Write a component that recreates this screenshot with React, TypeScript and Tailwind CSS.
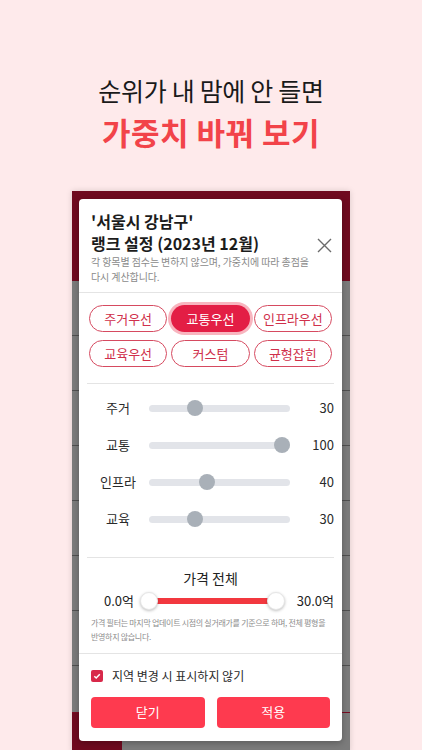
import React from 'react'

const presets = ['주거우선', '교통우선', '인프라우선', '교육우선', '커스텀', '균형잡힌']

const weights = [
  { label: '주거', value: 30 },
  { label: '교통', value: 100 },
  { label: '인프라', value: 40 },
  { label: '교육', value: 30 },
]

function Slider({ value }: { value: number }) {
  // thumb centre moves over the track, 8px inset on each side
  return (
    <div className="relative h-[16px] flex-1 flex items-center">
      <div className="h-[7px] w-full rounded-full bg-[#e2e4e9]" />
      <div
        className="absolute top-0 h-[16px] w-[16px] rounded-full bg-[#a9b0b8]"
        style={{ left: `calc(${value}% - ${(value / 100) * 16}px)` }}
      />
    </div>
  )
}

export default function App() {
  return (
    <div
      className="w-[422px] h-[750px] overflow-hidden bg-[#feeaeb] flex flex-col items-center"
      style={{ fontFamily: '"Noto Sans CJK KR", "Noto Sans", sans-serif' }}
    >
      <div className="pt-[73px] flex flex-col items-center">
        <h1 className="text-[25px] leading-[34px] font-normal text-[#1a1a1a] tracking-[-0.3px]">순위가 내 맘에 안 들면</h1>
        <h2 className="mt-[5px] text-[31px] leading-[40px] font-bold text-[#f24349] tracking-[0.5px]">가중치 바꿔 보기</h2>
      </div>

      <div className="relative mt-[39px] w-[278px] flex-1 shadow-[0_0_6px_rgba(0,0,0,0.15)]">
        {/* screenshot behind the dialog */}
        <div className="h-[90px] bg-[#6f0a1f]" />
        <div className="bg-[#7b7b7b]">
          {[0, 1, 2, 3, 4, 5, 6].map((i) => (
            <div key={i} className="h-[55px] border-b border-[#505050]" />
          ))}
          <div className="h-[46px]" />
        </div>
        <div className="flex h-[40px] border-t border-[#7a0c22]">
          <div className="w-[50px] bg-[#6f0a1f]" />
          <div className="flex-1 bg-[#7b7b7b]" />
        </div>

        {/* dialog */}
        <div className="absolute left-[7px] right-[8px] top-[8px] rounded-[4px] bg-white shadow-[0_2px_6px_rgba(0,0,0,0.25)]">
          <div className="relative px-[12px] pt-[11px] pb-[8px] border-b border-[#e4e4e4]">
            <p className="text-[16px] leading-[22px] font-bold text-[#1c1c1c]">
              '서울시 강남구'
              <br />
              랭크 설정 (2023년 12월)
            </p>
            <p className="text-[10px] leading-[15px] text-[#8a8a8a] tracking-[-0.1px]">
              각 항목별 점수는 변하지 않으며, 가중치에 따라 총점을
              <br />
              다시 계산합니다.
            </p>
            <svg className="absolute right-[10px] top-[39px]" width="15" height="15" viewBox="0 0 15 15">
              <path d="M1 1L14 14M14 1L1 14" stroke="#6b6b6b" strokeWidth="1.4" fill="none" />
            </svg>
          </div>

          <div className="mx-[8px] pt-[12px] pb-[16px] border-b border-[#e4e4e4] grid grid-cols-3 gap-x-[4px] gap-y-[8px] px-[2px]">
            {presets.map((p) =>
              p === '교통우선' ? (
                <div
                  key={p}
                  className="h-[27px] rounded-full bg-[#e31e45] ring-[3px] ring-[#f8b5bf] flex items-center justify-center text-[13px] text-white"
                >
                  {p}
                </div>
              ) : (
                <div
                  key={p}
                  className="h-[27px] rounded-full border border-[#d64a60] flex items-center justify-center text-[13px] text-[#d0304b]"
                >
                  {p}
                </div>
              )
            )}
          </div>

          <div className="mx-[8px] pt-[16px] pb-[30px] border-b border-[#e4e4e4] flex flex-col gap-[21px]">
            {weights.map((w) => (
              <div key={w.label} className="flex items-center h-[16px]">
                <span className="w-[62px] text-center text-[13px] text-[#2a2a2a]">{w.label}</span>
                <Slider value={w.value} />
                <span className="w-[44px] text-right text-[13px] text-[#2a2a2a]">{w.value}</span>
              </div>
            ))}
          </div>

          <div className="pt-[10px] pb-[9px] border-b border-[#e4e4e4]">
            <p className="text-center text-[14px] leading-[20px] text-[#222]">가격 전체</p>
            <div className="flex items-center pl-[25px] pr-[8px] mt-[3px] gap-[6px]">
              <span className="text-[13px] text-[#222]">0.0억</span>
              <div className="relative flex-1 h-[18px] flex items-center">
                <div className="absolute left-[8px] right-[8px] h-[6px] bg-[#f2383f]" />
                <div className="absolute left-0 h-[18px] w-[18px] rounded-full bg-white border border-[#e6e6e6] shadow-[0_1px_3px_rgba(0,0,0,0.25)]" />
                <div className="absolute right-0 h-[18px] w-[18px] rounded-full bg-white border border-[#e6e6e6] shadow-[0_1px_3px_rgba(0,0,0,0.25)]" />
              </div>
              <span className="ml-[6px] text-[13px] text-[#222]">30.0억</span>
            </div>
            <p className="mt-[5px] px-[12px] text-[8px] leading-[14px] text-[#8c8c8c] tracking-[-0.3px]">
              가격 필터는 마지막 업데이트 시점의 실거래가를 기준으로 하며, 전체 평형을
              <br />
              반영하지 않습니다.
            </p>
          </div>

          <div className="px-[12px] pt-[13px] pb-[13px]">
            <div className="flex items-center gap-[9px]">
              <div className="w-[12px] h-[12px] rounded-[2px] bg-[#d8294a] flex items-center justify-center">
                <svg width="8" height="8" viewBox="0 0 8 8">
                  <path d="M1.3 4.2L3.2 6L6.8 2.2" stroke="white" strokeWidth="1.5" fill="none" />
                </svg>
              </div>
              <span className="text-[12px] text-[#2a2a2a]">지역 변경 시 표시하지 않기</span>
            </div>
            <div className="mt-[12px] flex gap-[12px]">
              <button className="flex-1 h-[31px] rounded-[4px] bg-[#fe3a4f] text-white text-[13px]">닫기</button>
              <button className="flex-1 h-[31px] rounded-[4px] bg-[#fe3a4f] text-white text-[13px]">적용</button>
            </div>
          </div>
        </div>
      </div>
    </div>
  )
}
